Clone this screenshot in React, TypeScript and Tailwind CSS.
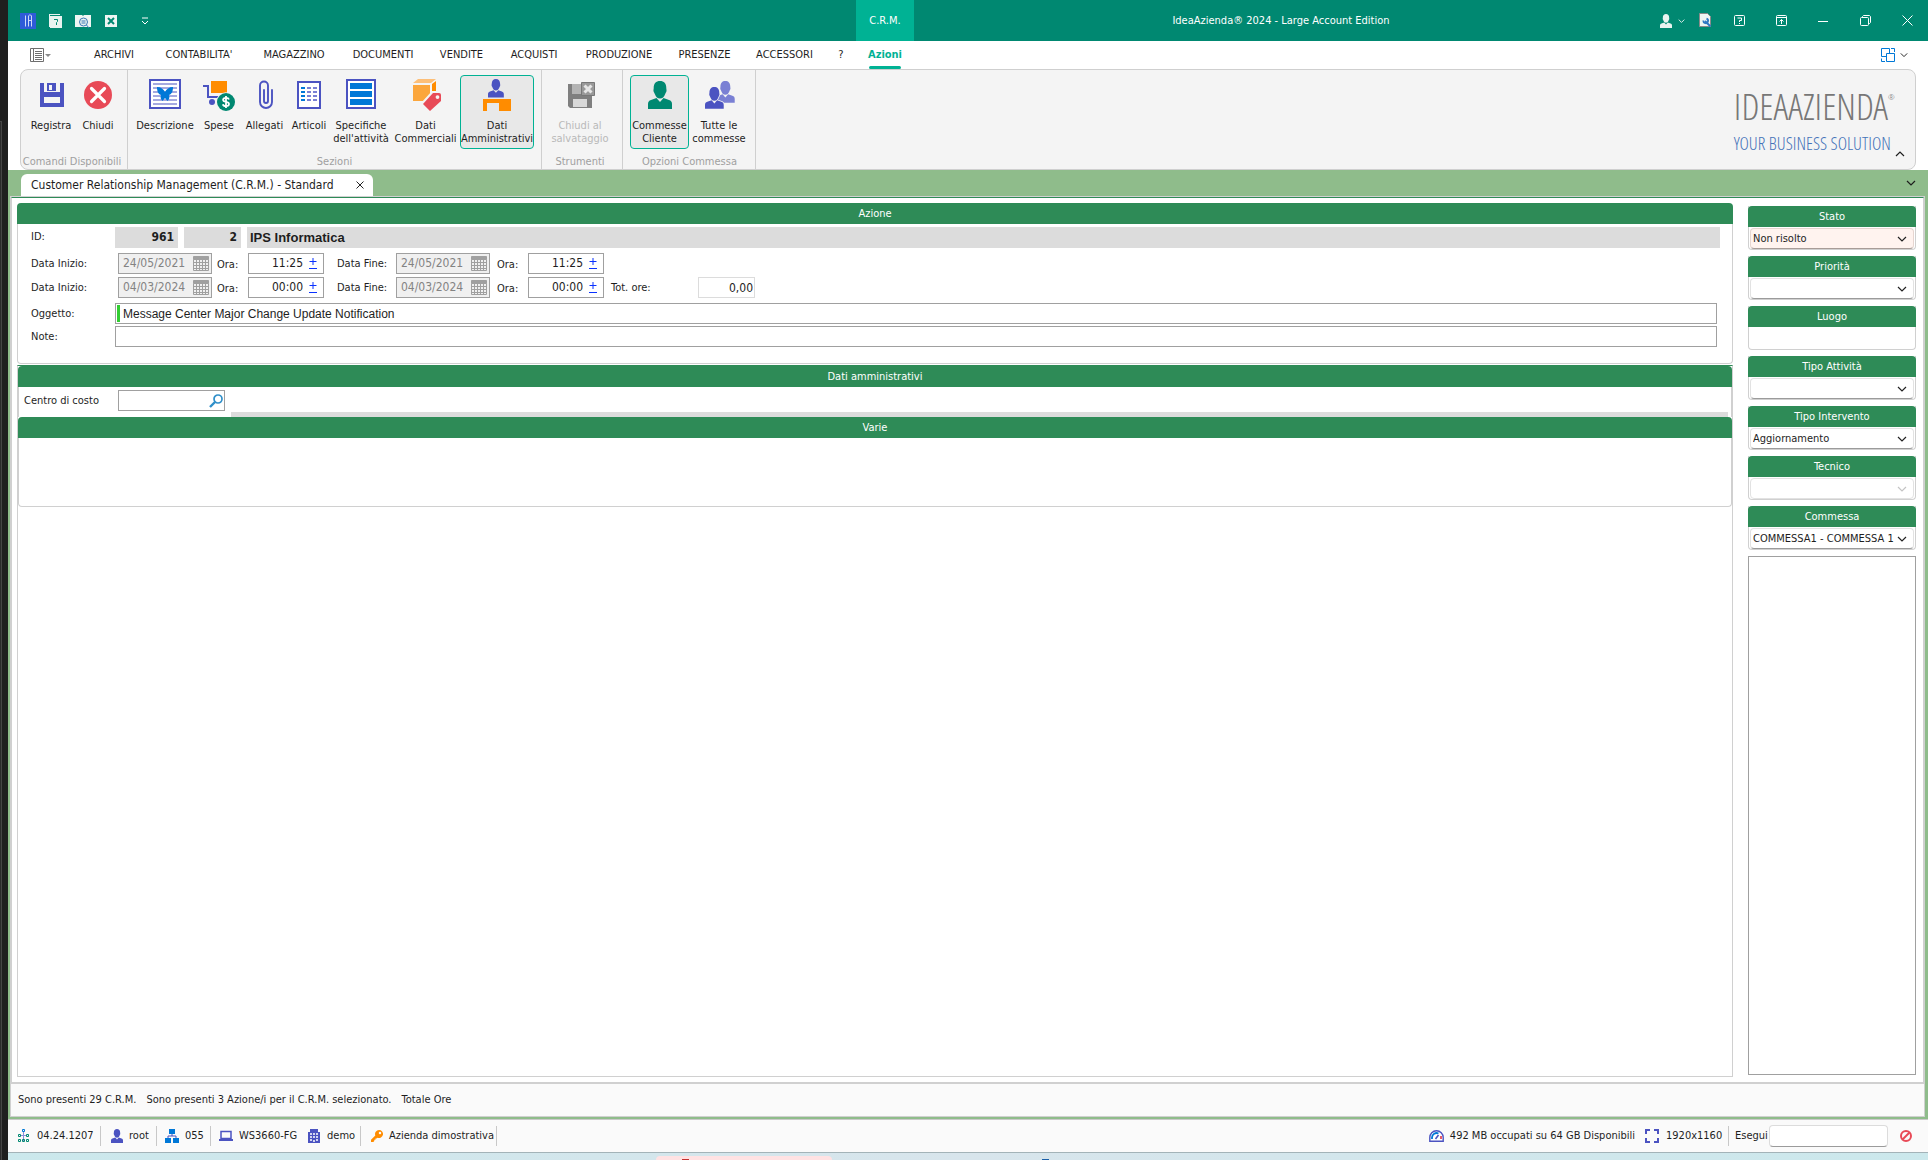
import type { ReactNode } from "react";

/* ---------- shared pieces ---------- */

function Chevron({ className, up = false }: { className?: string; up?: boolean }) {
  return (
    <svg viewBox="0 0 10 6" width="10" height="6" className={className} fill="none" stroke="currentColor" strokeWidth="1.2" aria-hidden="true">
      <path d={up ? "M1 5 5 1l4 4" : "M1 1l4 4 4-4"} />
    </svg>
  );
}

function Person({ x = 0, y = 0, s = 1, fill }: { x?: number; y?: number; s?: number; fill: string }) {
  return (
    <g transform={`translate(${x} ${y}) scale(${s})`} fill={fill}>
      <path d="M12 0c4 0 6.300 2.600 6.300 7 0 1.500.4 1.600.2 3-.3 1.600-.9 1.700-1.300 3C16 16 14.500 17.500 12 17.500S8 16 6.800 13c-.4-1.300-1-1.400-1.300-3-.2-1.400.2-1.500.2-3C5.700 2.600 8 0 12 0z" />
      <path d="M0 28v-5c0-2.200 1-3.300 3-4l5.500-2 3.500 4 3.500-4 5.500 2c2 .7 3 1.800 3 4v5z" />
    </g>
  );
}

/* ---------- ribbon icons (32 x 32) ---------- */

const BLUE = "#4b53c1";

const icons: Record<string, ReactNode> = {
  save: (
    <>
      <path fill={BLUE} d="M5 4h4v9h16V4h4v24H5z" />
      <path fill={BLUE} d="M12 4h9v8h-9z" />
      <path fill="#f4f4f4" d="M14 6h3v5h-3zM9 18h16v6H9z" />
    </>
  ),
  close: (
    <>
      <circle cx="16" cy="16" r="14" fill="#e84a57" />
      <path d="m9.500 9.500 13 13m0-13-13 13" stroke="#fff" strokeWidth="3.200" strokeLinecap="round" />
    </>
  ),
  description: (
    <>
      <rect x="1" y="1" width="30" height="28" fill="#fff" stroke={BLUE} strokeWidth="2" />
      <path d="M4 5h24M4 9h24M4 13h24M4 17h24M4 21h24M4 25h24" stroke="#a5a9e0" strokeWidth="2" />
      <path fill="#0078d7" d="M8 8c4 0 6.500 2 8 5 1.500-3 4-5 8-5 0 4-1 7-4 8 1 2.500 0 4.500-1.500 6L16 19l-2.500 3C12 20.500 11 18.500 12 16c-3-1-4-4-4-8z" />
    </>
  ),
  cart: (
    <>
      <path d="M0 7h5v11h14" fill="none" stroke={BLUE} strokeWidth="2" />
      <path fill="#ff8c00" d="M8 2h16v12H8z" />
      <circle cx="9" cy="23" r="3" fill={BLUE} />
      <circle cx="23" cy="23" r="9.800" fill="#f4f4f4" />
      <circle cx="23" cy="23" r="9" fill="#008871" />
      <path d="M26 20.500c-.4-1.200-1.500-1.700-3-1.700-1.700 0-2.900.7-2.900 2s1.200 1.800 2.900 2.100 3 .9 3 2.200-1.300 2.100-3 2.100c-1.600 0-2.800-.7-3.100-2M23 17v12" fill="none" stroke="#fff" strokeWidth="1.800" />
    </>
  ),
  clip: (
    <path
      d="M19 9V6.500a4 4 0 0 0-8 0V23a6 6 0 0 0 12 0V11M19 9v13a2 2 0 0 1-4 0V11"
      fill="none"
      stroke={BLUE}
      strokeWidth="1.900"
      strokeLinecap="round"
    />
  ),
  items: (
    <>
      <rect x="5" y="3" width="22" height="26" fill="#fff" stroke={BLUE} strokeWidth="2" />
      <path d="M8 9h4M8 13h4M8 17h4M8 21h4" stroke="#0078d7" strokeWidth="2" />
      <path d="M14 9h4m2 0h4M14 13h4m2 0h4M14 17h4m2 0h4M14 21h4m2 0h4" stroke="#7a80d4" strokeWidth="2" />
    </>
  ),
  spec: (
    <>
      <rect x="2" y="1" width="28" height="28" fill="#fff" stroke={BLUE} strokeWidth="2" />
      <path d="M5 7h22M5 15h22M5 23h22" stroke="#0078d7" strokeWidth="6" />
    </>
  ),
  commercial: (
    <>
      <path fill="#fdbf78" d="m8 0h18l-5 4H3z" />
      <path fill="#fba63c" d="M3 6h17v16H3z" />
      <path fill="#ff8c00" d="m22 5 4-3v10l-4 4z" />
      <path fill="#f4f4f4" d="M22 12h11v11L20 33 11 24z" />
      <path fill="#e84a57" d="M23 14h6a2 2 0 0 1 2 2v6L20 32l-7-7zm4.500 2.200a1.900 1.900 0 1 0 0 3.800 1.900 1.900 0 0 0 0-3.800z" fillRule="evenodd" />
    </>
  ),
  admin: (
    <>
      <Person x={7} s={0.66} y={0} fill={BLUE} />
      <path fill="#ff8c00" d="M2 20h28v12H18v-8H6v8H2z" />
    </>
  ),
  saveclose: (
    <>
      <path fill="#7f7f7f" d="M4 5h24v24H6l-2-2z" />
      <path fill="#b4b4b4" d="M8 5h10v10H8z" />
      <path fill="#d8d8d8" d="M9 20h14v8H9z" />
      <path fill="#999" stroke="#777" d="M17.500 3.500h13v13h-13z" />
      <path d="m20.500 6.500 7 7m0-7-7 7" stroke="#e6e6e6" strokeWidth="3" />
    </>
  ),
  client: <Person x={4} y={2} fill="#008871" />,
  clients: (
    <>
      <Person x={13} y={2} s={0.78} fill="#7a80d4" />
      <g stroke="#f4f4f4" strokeWidth="2">
        <Person x={2} y={8} s={0.78} fill="#f4f4f4" />
      </g>
      <Person x={2} y={8} s={0.78} fill={BLUE} />
    </>
  ),
};

type Tool = { icon: string; lines: string[]; width: string; state?: "active" | "disabled" };
type Group = { title: string; box: string; tools: Tool[] };

const groups: Group[] = [
  {
    title: "Comandi Disponibili",
    box: "w-[107px] pl-1 pr-2",
    tools: [
      { icon: "save", lines: ["Registra"], width: "w-[52px]" },
      { icon: "close", lines: ["Chiudi"], width: "w-[42px]" },
    ],
  },
  {
    title: "Sezioni",
    box: "w-[414px] px-1.5",
    tools: [
      { icon: "description", lines: ["Descrizione"], width: "w-[62px]" },
      { icon: "cart", lines: ["Spese"], width: "w-[46px]" },
      { icon: "clip", lines: ["Allegati"], width: "w-[45px]" },
      { icon: "items", lines: ["Articoli"], width: "w-[44px]" },
      { icon: "spec", lines: ["Specifiche", "dell'attività"], width: "w-[60px]" },
      { icon: "commercial", lines: ["Dati", "Commerciali"], width: "w-[69px]" },
      { icon: "admin", lines: ["Dati", "Amministrativi"], width: "w-[74px]", state: "active" },
    ],
  },
  {
    title: "Strumenti",
    box: "w-[81px] pl-1 pr-2",
    tools: [{ icon: "saveclose", lines: ["Chiudi al", "salvataggio"], width: "w-[68px]", state: "disabled" }],
  },
  {
    title: "Opzioni Commessa",
    box: "w-[133px] pl-[7px] pr-1.5",
    tools: [
      { icon: "client", lines: ["Commesse", "Cliente"], width: "w-[59px]", state: "active" },
      { icon: "clients", lines: ["Tutte le", "commesse"], width: "w-[60px]" },
    ],
  },
];

function ToolButton({ tool }: { tool: Tool }) {
  const look =
    tool.state === "active"
      ? "border-[#00b294] bg-[#e8e8e8]"
      : tool.state === "disabled"
        ? "border-transparent text-[#b9b9b9]"
        : "border-transparent";
  return (
    <button type="button" disabled={tool.state === "disabled"} className={`flex h-[74px] shrink-0 flex-col items-center gap-2 rounded border pt-[3px] ${tool.width} ${look}`}>
      <svg viewBox="0 0 32 32" width="32" height="32" fill="none" className="shrink-0" aria-hidden="true">
        {icons[tool.icon]}
      </svg>
      <span className="flex flex-col items-center leading-[13px] whitespace-nowrap">
        {tool.lines.map((l) => (
          <span key={l}>{l}</span>
        ))}
      </span>
    </button>
  );
}

function Ribbon() {
  return (
    <div className="bg-white pr-3 pl-3">
      <div className="flex h-[101px] rounded-lg border border-[#cfcfcf] bg-[#f4f4f4]">
        {groups.map((g) => (
          <section key={g.title} aria-label={g.title} className={`flex shrink-0 flex-col border-r border-[#cfcfcf] pt-[5px] ${g.box}`}>
            <div className="flex">
              {g.tools.map((t) => (
                <ToolButton key={t.icon} tool={t} />
              ))}
            </div>
            <p className="-mx-1 mt-1 text-center leading-[18px] whitespace-nowrap text-[#a0a0a0]">{g.title}</p>
          </section>
        ))}
        <div className="flex flex-1 items-start justify-end pr-2.5">
          <div className="-mr-0.5 flex h-full flex-col pt-[11px] font-['Open_Sans_Condensed_Light','Lato',sans-serif]">
            <p className="flex text-[37px] leading-[50px] text-[#777777]">
              IDEAAZIENDA<span className="w-[9px] text-[8px] leading-8">®</span>
            </p>
            <p className="text-[18px] leading-6 whitespace-nowrap text-[#4472b8]">YOUR BUSINESS SOLUTION</p>
          </div>
          <button type="button" aria-label="Riduci barra" className="self-end pb-3">
            <Chevron up />
          </button>
        </div>
      </div>
    </div>
  );
}

/* ---------- title bar and menu ---------- */

function IconButton({ label, width, children }: { label: string; width: string; children: ReactNode }) {
  return (
    <button type="button" aria-label={label} className={`flex items-center justify-center gap-1.5 ${width}`}>
      {children}
    </button>
  );
}

function TitleBar() {
  return (
    <header className="flex h-[41px] bg-[#008871] text-white">
      <div className="flex w-[848px] shrink-0 items-center pl-2">
        <IconButton label="IdeaAzienda" width="w-6">
          <svg width="16" height="16" viewBox="0 0 16 16" fill="none" aria-hidden="true">
            <path fill="#2f5bd8" d="M0 0h16v16H0z" />
            <path d="M5.500 2.500v11M8.500 13.500V4a1.500 1.500 0 0 1 3-1v10.500M8.500 7.500h3" stroke="#cfd9f7" />
          </svg>
        </IconButton>
        <IconButton label="Guida" width="w-[31px]">
          <svg width="14" height="14" viewBox="0 0 14 14" aria-hidden="true">
            <path fill="#e8f3f0" d="M0 0h11v1H1v12H0zM1 2h12v12H1z" />
            <path d="M5 5.500h3.500v2L7.500 8.500V11" fill="none" stroke="#008871" />
          </svg>
        </IconButton>
        <IconButton label="Anteprima" width="w-6">
          <svg width="16" height="14" viewBox="0 0 16 14" aria-hidden="true">
            <path fill="#eef5f3" d="M0 1h7l1 1 1-1h7v12H0z" />
            <circle cx="8.500" cy="8" r="4" fill="#e8f3f0" stroke="#3d79b8" />
            <path d="M6.500 7h4m-4 2h4m1 2 2.500 3" stroke="#3d79b8" />
          </svg>
        </IconButton>
        <IconButton label="Esporta in Excel" width="w-8">
          <svg width="12" height="12" viewBox="0 0 12 12" aria-hidden="true">
            <path fill="#eef5f3" d="M0 0h12v12H0z" />
            <path d="m3 3 6 6m0-6L3 9" stroke="#008871" strokeWidth="2" />
          </svg>
        </IconButton>
        <IconButton label="Personalizza" width="w-9">
          <svg width="8" height="8" viewBox="0 0 8 8" fill="none" stroke="#fff" aria-hidden="true">
            <path d="M1 1h6M1 4l3 3 3-3" />
          </svg>
        </IconButton>
      </div>
      <button type="button" className="w-[58px] shrink-0 bg-[#00b294] leading-[42px]">
        C.R.M.
      </button>
      <h1 className="flex-1 pr-2 text-center leading-[42px]">IdeaAzienda® 2024 - Large Account Edition</h1>
      <div className="flex shrink-0">
        <IconButton label="Utente" width="w-8">
          <svg width="12" height="14" viewBox="0 0 24 28" className="shrink-0" aria-hidden="true">
            <Person fill="#e8f3f0" />
          </svg>
          <Chevron className="w-[7px] shrink-0" />
        </IconButton>
        <IconButton label="Impostazioni" width="w-[30px] pl-1">
          <svg width="13" height="15" viewBox="0 0 13 15" aria-hidden="true">
            <path fill="#eef5f3" stroke="#8a8a8a" d="M.5.5h8l3 3v10H.5z" />
            <path d="m6 8 5.500 5.500" stroke="#2f78c4" strokeWidth="2" />
            <path d="M4.500 7.500a2.300 2.300 0 1 0 3-1.800" fill="none" stroke="#2f78c4" strokeWidth="1.800" />
          </svg>
        </IconButton>
        <IconButton label="Aiuto" width="w-[42px]">
          <svg width="11" height="11" viewBox="0 0 11 11" fill="none" stroke="#fff" aria-hidden="true">
            <rect x=".5" y=".5" width="10" height="10" rx="1" />
            <path d="M3.500 3h4v2.500h-2V7M5.500 8v1" />
          </svg>
        </IconButton>
        <IconButton label="Opzioni barra" width="w-[42px]">
          <svg width="11" height="11" viewBox="0 0 11 11" fill="none" stroke="#fff" aria-hidden="true">
            <rect x=".5" y=".5" width="10" height="10" rx="1" />
            <path d="M1 2.500h9M5.500 9V4.500M3.500 6.500l2-2 2 2" />
          </svg>
        </IconButton>
        <IconButton label="Riduci a icona" width="w-[42px]">
          <svg width="10" height="10" viewBox="0 0 10 10" stroke="#fff" aria-hidden="true">
            <path d="M0 5.500h10" />
          </svg>
        </IconButton>
        <IconButton label="Ripristina" width="w-[42px]">
          <svg width="11" height="11" viewBox="0 0 11 11" fill="none" stroke="#fff" aria-hidden="true">
            <rect x=".5" y="2.500" width="8" height="8" rx="1" />
            <path d="M2.500 2.500v-1l1-1h6l1 1v6l-1 1h-1" />
          </svg>
        </IconButton>
        <IconButton label="Chiudi finestra" width="w-[42px]">
          <svg width="11" height="11" viewBox="0 0 11 11" fill="none" stroke="#fff" aria-hidden="true">
            <path d="m.5.500 10 10m0-10-10 10" />
          </svg>
        </IconButton>
      </div>
    </header>
  );
}

const menu = [
  ["ARCHIVI", "w-[70px]"],
  ["CONTABILITA'", "w-[100px]"],
  ["MAGAZZINO", "w-[90px]"],
  ["DOCUMENTI", "w-[88px]"],
  ["VENDITE", "w-[69px]"],
  ["ACQUISTI", "w-[76px]"],
  ["PRODUZIONE", "w-[94px]"],
  ["PRESENZE", "w-[77px]"],
  ["ACCESSORI", "w-[83px]"],
  ["?", "w-[30px]"],
] as const;

function MenuBar() {
  return (
    <nav className="flex h-7 bg-white">
      <button type="button" aria-label="File" className="flex w-[71px] items-center gap-px pl-[22px]">
        <svg width="14" height="14" viewBox="0 0 14 14" fill="none" stroke="#6e6e6e" aria-hidden="true">
          <path d="M.5.500h13v13H.5zM3.500.500v13M5 3.500h7M5 5.500h7M5 7.500h7M5 9.500h7M5 11.500h7" />
        </svg>
        <svg width="6" height="3" viewBox="0 0 6 3" aria-hidden="true">
          <path fill="#8a8a8a" d="M0 0h6L3 3z" />
        </svg>
      </button>
      {menu.map(([t, w]) => (
        <button key={t} type="button" className={w}>
          {t}
        </button>
      ))}
      <button type="button" className="flex w-[58px] flex-col items-center justify-end font-bold text-[#00b294]">
        <span className="leading-[22px]">Azioni</span>
        <span className="h-[3px] w-8 rounded-full bg-[#00b294]" />
      </button>
      <button type="button" aria-label="Finestre" className="ml-auto flex items-center gap-1 pr-5">
        <svg width="15" height="15" viewBox="0 0 15 15" fill="none" stroke="#0078d7" aria-hidden="true">
          <path d="M5.500 8.500h-5v-8h8v5M5.500 5.500h8v8h-8zM10 .5h3.500V4M.5 10.500v3H4" />
        </svg>
        <Chevron className="w-2" />
      </button>
    </nav>
  );
}

/* ---------- form ---------- */

function Bar({ children, className = "" }: { children: ReactNode; className?: string }) {
  return <h2 className={`h-[21px] rounded-t bg-[#2e8b57] text-center leading-[22px] text-white ${className}`}>{children}</h2>;
}

function DateField({ id, value }: { id: string; value: string }) {
  return (
    <div className="flex h-[21px] w-[94px] items-center border border-[#a0a0a0] bg-[#f0f0f0] pr-0.5">
      <input id={id} disabled defaultValue={value} className="min-w-0 flex-1 pl-1 text-[12px] text-[#838383]" />
      <svg width="16" height="15" viewBox="0 0 16 15" fill="none" stroke="#a0a0a0" className="shrink-0" aria-hidden="true">
        <path fill="#a0a0a0" d="M.5.500h15v3H.5z" />
        <path d="M.5 3.500v11h15v-11M3.500 3v11M6.500 3v11M9.500 3v11M12.500 3v11M0 6.500h16M0 9.500h16M0 12.500h16" />
      </svg>
    </div>
  );
}

function TimeField({ id, value }: { id: string; value: string }) {
  return (
    <div className="flex h-[21px] w-[76px] items-center border border-[#a0a0a0] bg-white pr-1.5">
      <input id={id} defaultValue={value} className="min-w-0 flex-1 text-right text-[12px]" />
      <button type="button" aria-label="Modifica ora" className="ml-1.5">
        <svg width="8" height="13" viewBox="0 0 8 13" fill="none" stroke="#0a32ff" aria-hidden="true">
          <path d="M4 1v7M.5 4.500h7M0 11.500h8" />
        </svg>
      </button>
    </div>
  );
}

function PeriodRow({ n, date, time, children }: { n: number; date: string; time: string; children?: ReactNode }) {
  return (
    <div className="flex h-[21px] items-center leading-[19px]">
      <label htmlFor={`di${n}`} className="w-[87px]">
        Data Inizio:
      </label>
      <DateField id={`di${n}`} value={date} />
      <label htmlFor={`oi${n}`} className="w-9 pt-0.5 pl-[5px]">
        Ora:
      </label>
      <TimeField id={`oi${n}`} value={time} />
      <label htmlFor={`df${n}`} className="w-[72px] pl-[13px]">
        Data Fine:
      </label>
      <DateField id={`df${n}`} value={date} />
      <label htmlFor={`of${n}`} className="w-[38px] pt-0.5 pl-[7px]">
        Ora:
      </label>
      <TimeField id={`of${n}`} value={time} />
      {children}
    </div>
  );
}

function MainForm() {
  return (
    <div className="flex min-w-0 flex-1 flex-col">
      <section className="pb-px">
        <Bar>Azione</Bar>
        <div className="flex flex-col rounded-b border border-t-0 border-[#d0d0d0] pt-[3px] pr-[15px] pb-4 pl-[13px]">
          <div className="flex h-[21px] items-center text-[12px] font-bold">
            <span className="w-[84px] text-[11px] font-normal">ID:</span>
            <output className="w-[63px] bg-[#dcdcdc] pr-1 text-right leading-[21px]">961</output>
            <output className="ml-1.5 w-[57px] bg-[#dcdcdc] pr-1 text-right leading-[21px]">2</output>
            <output className="-mr-[3px] ml-1.5 flex-1 bg-[#dcdcdc] pl-[3px] font-['Liberation_Sans'] text-[13px] leading-[21px]">
              IPS Informatica
            </output>
          </div>
          <div className="mt-[5px] flex flex-col gap-[3px]">
            <PeriodRow n={1} date="24/05/2021" time="11:25" />
            <PeriodRow n={2} date="04/03/2024" time="00:00">
              <label htmlFor="tot" className="w-[94px] pl-[7px]">
                Tot. ore:
              </label>
              <input id="tot" readOnly defaultValue="0,00" className="h-[21px] w-[57px] border border-[#dcdcdc] pr-px text-right text-[12px]" />
            </PeriodRow>
          </div>
          <div className="mt-[5px] flex h-[21px] items-center">
            <label htmlFor="oggetto" className="w-[84px] leading-[21px]">
              Oggetto:
            </label>
            <div className="flex h-full flex-1 border border-[#a0a0a0] p-px">
              <span className="w-[3px] bg-[#32cd32]" />
              <input id="oggetto" defaultValue="Message Center Major Change Update Notification" className="min-w-0 flex-1 pl-[3px] font-['Liberation_Sans'] text-[12px]" />
            </div>
          </div>
          <div className="mt-0.5 flex h-[21px] items-center">
            <label htmlFor="note" className="w-[84px] leading-[21px]">
              Note:
            </label>
            <input id="note" className="h-full min-w-0 flex-1 border border-[#a0a0a0] px-1" />
          </div>
        </div>
      </section>

      <div className="flex flex-1 flex-col border border-t-[#2e8b57] border-[#d0d0d0]">
        <section>
          <Bar>Dati amministrativi</Bar>
          <div className="flex h-[30px] border-x border-[#d0d0d0] pt-[3px] pr-[3px] pl-[5px]">
            <label htmlFor="centro" className="w-[94px] leading-[22px]">
              Centro di costo
            </label>
            <div className="flex h-[21px] w-[107px] items-center border border-[#a0a0a0] pr-px">
              <input id="centro" className="min-w-0 flex-1 pl-1" />
              <svg width="14" height="14" viewBox="0 0 14 14" fill="none" stroke="#2f8fc9" aria-hidden="true">
                <circle cx="9" cy="5" r="4" strokeWidth="1.700" />
                <path d="M6 8 1 13" strokeWidth="2.400" />
              </svg>
            </div>
            <span className="ml-1.5 h-[5px] flex-1 self-end bg-[#dcdcdc]" />
          </div>
        </section>
        <section>
          <Bar>Varie</Bar>
          <div className="h-[69px] rounded-b border border-t-0 border-[#d0d0d0]" />
        </section>
      </div>
    </div>
  );
}

/* ---------- side filters ---------- */

type Filter = { title: string; value?: string; kind?: "text" | "disabled" | "alert" };
const filters: Filter[] = [
  { title: "Stato", value: "Non risolto", kind: "alert" },
  { title: "Priorità" },
  { title: "Luogo", kind: "text" },
  { title: "Tipo Attività" },
  { title: "Tipo Intervento", value: "Aggiornamento" },
  { title: "Tecnico", kind: "disabled" },
  { title: "Commessa", value: "COMMESSA1 - COMMESSA 1" },
];

function FilterBox({ f }: { f: Filter }) {
  const look =
    f.kind === "alert"
      ? "border-[#e6d5d0] border-b-[#a89c98] bg-[#fff3ef]"
      : f.kind === "disabled"
        ? "border-[#e2e2e2]"
        : "border-[#e2e2e2] border-b-[#9b9b9b]";
  return (
    <div className="rounded-b border border-t-0 border-[#d0d0d0]">
      <Bar className="-mx-px">{f.title}</Bar>
      {f.kind === "text" ? (
        <input aria-label={f.title} className="h-[22px] w-full px-1" />
      ) : (
        <div className="relative px-px pt-px">
          <select
            aria-label={f.title}
            disabled={f.kind === "disabled"}
            className={`h-[21px] w-full appearance-none rounded border pl-0.5 leading-[19px] opacity-100 ${look}`}
          >
            <option>{f.value ?? ""}</option>
          </select>
          <Chevron className={`pointer-events-none absolute top-[9px] right-2 ${f.kind === "disabled" ? "text-[#c4c4c4]" : "text-[#222]"}`} />
        </div>
      )}
    </div>
  );
}

function SidePanel() {
  return (
    <aside className="mt-[3px] mb-0.5 ml-[15px] flex w-[168px] shrink-0 flex-col gap-1.5">
      {filters.map((f) => (
        <FilterBox key={f.title} f={f} />
      ))}
      <div className="flex-1 border border-[#a0a0a0]" />
    </aside>
  );
}

/* ---------- status bars ---------- */

function StatusItem({ width, icon, iconWidth = "w-[19px]", rule = true, children }: { width: string; icon: ReactNode; iconWidth?: string; rule?: boolean; children: ReactNode }) {
  return (
    <div className={`flex h-5 shrink-0 items-center whitespace-nowrap ${width} ${rule ? "border-r border-[#c8c8c8]" : ""}`}>
      <span className={`shrink-0 ${iconWidth}`}>{icon}</span>
      {children}
    </div>
  );
}

function StatusBar() {
  return (
    <footer className="flex h-[33px] items-center border-t border-[#c9c9c9] bg-[#fafafa] pl-2.5">
      <StatusItem
        width="w-[83px]"
        icon={
          <svg width="12" height="14" viewBox="0 0 12 14" fill="none" stroke="#008871" aria-hidden="true">
            <path d="M4.500.500h2v2h-2z" stroke="#0078d7" />
            <path d="M5.500 3v9M2 6.500h7" stroke="#8a8fd8" />
            <path d="M.5 5.500h2v2h-2zM8.500 5.500h2v2h-2zM.5 10.500h2v2h-2zM8.500 10.500h2v2h-2zM4.500 10.500h2v2h-2z" />
          </svg>
        }
      >
        04.24.1207
      </StatusItem>
      <StatusItem
        width="w-14 pl-2.5"
        iconWidth="w-[18px]"
        icon={
          <svg width="12" height="14" viewBox="0 0 24 28" aria-hidden="true">
            <Person fill={BLUE} />
          </svg>
        }
      >
        root
      </StatusItem>
      <StatusItem
        width="w-[54px] pl-2"
        iconWidth="w-5"
        icon={
          <svg width="14" height="14" viewBox="0 0 14 14" aria-hidden="true">
            <path fill="#0078d7" d="M4 0h6v5H4zM0 9h6v5H0zM8 9h6v5H8z" />
            <path d="M3 9V7h8v2M7 5v2" fill="none" stroke={BLUE} />
          </svg>
        }
      >
        055
      </StatusItem>
      <StatusItem
        width="w-[97px] pl-2"
        iconWidth="w-5"
        rule={false}
        icon={
          <svg width="14" height="12" viewBox="0 0 14 12" aria-hidden="true">
            <path d="M2 1.500h10v7H2z" fill="none" stroke={BLUE} strokeWidth="1.500" />
            <path fill={BLUE} d="M0 9h14v2H0z" />
          </svg>
        }
      >
        WS3660-FG
      </StatusItem>
      <StatusItem
        width="w-[53px]"
        icon={
          <svg width="12" height="14" viewBox="0 0 12 14" aria-hidden="true">
            <path fill={BLUE} d="M2 0h8v3h2v11H0V3h2z" />
            <path stroke="#fff" d="M2 5h2M5 5h2M8 5h2M2 8h2M5 8h2M8 8h2M2 11h2M8 11h2M5 12h2" strokeWidth="1.700" />
          </svg>
        }
      >
        demo
      </StatusItem>
      <StatusItem
        width="w-[136px] pl-2.5"
        iconWidth="w-[18px]"
        icon={
          <svg width="12" height="12" viewBox="0 0 12 12" aria-hidden="true">
            <path fill="#ff8c00" fillRule="evenodd" d="M8 0a4 4 0 1 1-1.500 7.700L5.500 8.500H4.500v1.200H3.300v1.300L2.300 12H0v-2.300l4.300-4.300A4 4 0 0 1 8 0zm1 1.700A1.200 1.200 0 1 0 9 4.200 1.200 1.200 0 0 0 9 1.700z" />
          </svg>
        }
      >
        Azienda dimostrativa
      </StatusItem>
      <div className="ml-auto flex items-center pr-4">
        <StatusItem
          width="mr-2.5"
          iconWidth="w-[21px]"
          rule={false}
          icon={
            <svg width="15" height="12" viewBox="0 0 15 12" fill="none" aria-hidden="true">
              <path d="M.8 11.200V7.500a6.700 6.700 0 0 1 13.400 0v3.700z" fill="#fff" stroke={BLUE} strokeWidth="1.400" />
              <path d="M3 9V7.500A4.500 4.500 0 0 1 9.500 3.500" stroke="#0078d7" strokeWidth="1.800" />
              <path d="M12 9V6" stroke="#e84a57" strokeWidth="1.800" />
              <path d="m6.500 9 3-4" stroke={BLUE} strokeWidth="1.600" />
            </svg>
          }
        >
          492 MB occupati su 64 GB Disponibili
        </StatusItem>
        <StatusItem
          width="w-[84px]"
          iconWidth="w-[21px]"
          icon={
            <svg width="14" height="14" viewBox="0 0 14 14" fill="none" stroke={BLUE} strokeWidth="2" aria-hidden="true">
              <path d="M1 5V1h4M9 1h4v4M13 9v4H9M5 13H1V9" />
            </svg>
          }
        >
          1920x1160
        </StatusItem>
        <label htmlFor="esegui" className="w-10 pl-1.5">
          Esegui
        </label>
        <input id="esegui" className="h-[22px] w-[119px] rounded border border-[#dcdcdc] border-b-[#9b9b9b] bg-white px-1" />
        <button type="button" aria-label="Interrompi" className="ml-3">
          <svg width="12" height="12" viewBox="0 0 12 12" fill="none" stroke="#e84a57" strokeWidth="2" aria-hidden="true">
            <circle cx="6" cy="6" r="5" />
            <path d="m2.500 9.500 7-7" />
          </svg>
        </button>
      </div>
    </footer>
  );
}

function Taskbar() {
  return (
    <div className="flex h-2 items-end overflow-hidden border-t border-[#a3b3b8] bg-linear-to-r from-[#cbe8ec] via-[#d8e5ec] to-[#cbe8ec]">
      <div className="ml-[648px] flex h-1 w-[176px] items-end rounded-t bg-[#ffe2e3] pl-[26px]">
        <span className="h-px w-[7px] bg-[#c62f2f]" />
      </div>
      <span className="ml-[210px] h-px w-[7px] bg-[#1b5fa8]" />
    </div>
  );
}

export default function App() {
  return (
    <div className="flex min-h-screen bg-[#1f1f1f] font-['DejaVu_Sans_Condensed','DejaVu_Sans',sans-serif] text-[11px] text-[#1e1e1e]">
      <div className="flex w-2 shrink-0 pt-[121px]">
        <span className="w-0.5 border-t border-r border-[#454545] bg-[#2b2b2b]" />
      </div>
      <div className="flex min-w-0 flex-1 flex-col">
        <TitleBar />
        <MenuBar />
        <Ribbon />
        <main className="flex flex-1 flex-col bg-[#8fbc8b] pr-[3px] pb-0.5 pl-0.5">
          <div className="flex h-[26px] items-end justify-between pl-[11px]">
            <div className="flex h-[22px] w-[352px] items-center justify-between rounded-t-md bg-white pr-[9px] pl-2.5 text-[12px]">
              <span>Customer Relationship Management (C.R.M.) - Standard</span>
              <button type="button" aria-label="Chiudi scheda">
                <svg width="8" height="8" viewBox="0 0 8 8" stroke="#222" aria-hidden="true">
                  <path d="m.5.500 7 7m0-7-7 7" />
                </svg>
              </button>
            </div>
            <button type="button" aria-label="Elenco schede" className="self-center pr-[9px]">
              <Chevron />
            </button>
          </div>
          <div className="flex flex-1 flex-col border border-[#d0d0d0]">
            <div className="flex flex-1 border-x border-t border-b-2 border-[#d0d0d0] border-t-[#2e8b57] bg-white pt-[5px] pr-[7px] pb-[5px] pl-[5px]">
              <MainForm />
              <SidePanel />
            </div>
            <div className="flex h-8 items-center gap-2.5 bg-[#fafafa] pl-[7px]">
              <span>Sono presenti 29 C.R.M.</span>
              <span>Sono presenti 3 Azione/i per il C.R.M. selezionato.</span>
              <span>Totale Ore</span>
            </div>
          </div>
        </main>
        <StatusBar />
        <Taskbar />
      </div>
    </div>
  );
}
